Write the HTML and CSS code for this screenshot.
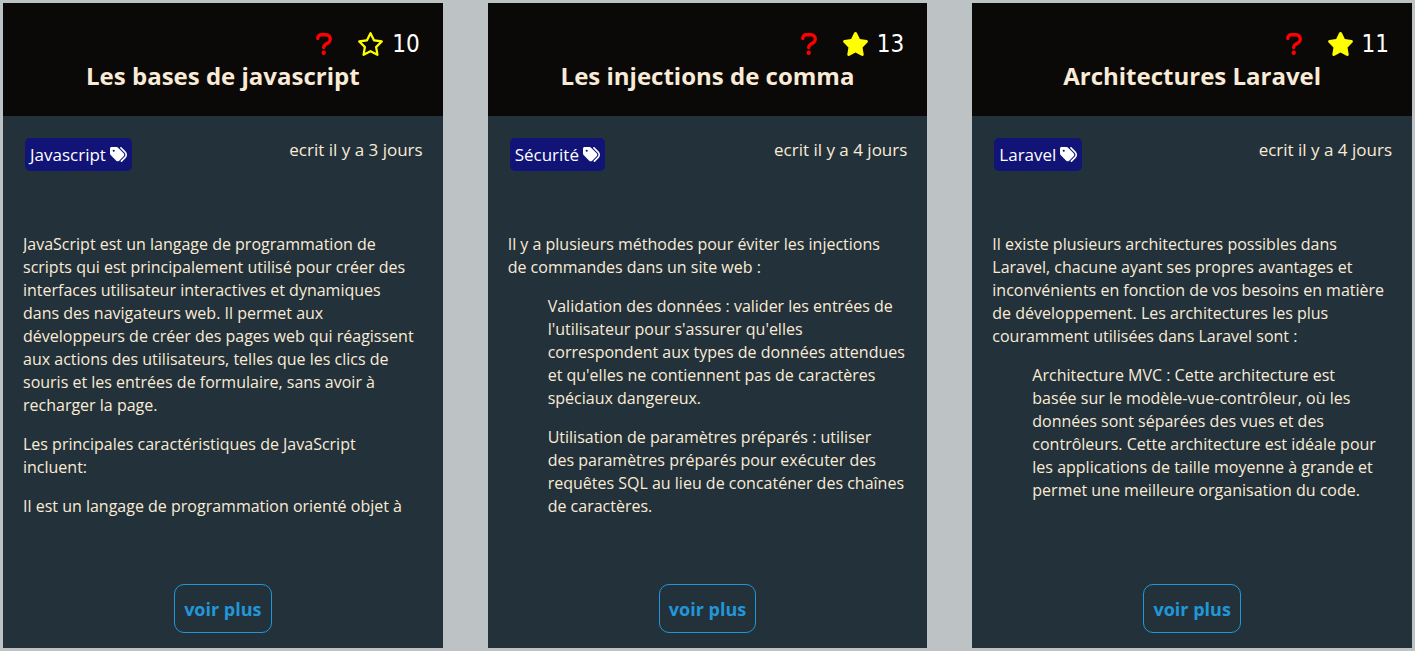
FILE: index.html
```html
<!DOCTYPE html>
<html lang="fr">
<head>
<meta charset="utf-8">
<meta name="viewport" content="width=device-width, initial-scale=1">
<title>Articles</title>
<link rel="stylesheet" href="styles.css">
</head>
<body>
<svg class="sprite" aria-hidden="true">
  <symbol id="question" viewBox="0 0 16 22"><path d="M1.800 5.600V5.200a3.400 3.400 0 0 1 3.400-3.400h5a4 4 0 0 1 4 4v.7q0 2.100-1.900 3.300L9.400 11.500q-1.700 1.100-1.700 3.100" fill="none" stroke="currentColor" stroke-width="3.400" stroke-linecap="round" stroke-linejoin="round"/><circle cx="7.700" cy="19.700" r="2.200" fill="currentColor"/></symbol>
  <symbol id="star" viewBox="0 0 576 512"><path fill="currentColor" d="M316.9 18C311.6 7 300.4 0 288.1 0s-23.4 7-28.8 18L195 150.3 51.4 171.5c-12 1.8-22 10.2-25.7 21.7s-.7 24.2 7.9 32.7L137.8 329 113.2 474.7c-2 12 3 24.2 12.9 31.3s23 8 33.8 2.3l128.3-68.5 128.3 68.5c10.8 5.7 23.9 4.9 33.8-2.3s14.9-19.3 12.9-31.3L438.5 329 542.7 225.9c8.6-8.5 11.7-21.2 7.9-32.700s-13.700-19.900-25.700-21.700L381.200 150.300 316.900 18z"/></symbol>
  <symbol id="star-outline" viewBox="0 0 576 512"><path fill="currentColor" d="M287.9 0c9.2 0 17.6 5.2 21.6 13.5l68.6 141.3 153.2 22.6c9 1.3 16.5 7.6 19.3 16.3s.5 18.1-5.900 24.500L433.600 328.400l26.200 155.600c1.500 9-2.200 18.100-9.700 23.500s-17.300 6-25.300 1.700l-137-73.200L151 509.100c-8.100 4.300-17.900 3.700-25.300-1.700s-11.200-14.500-9.700-23.500l26.200-155.600L31.100 218.200c-6.500-6.400-8.700-15.900-5.900-24.500s10.300-14.900 19.300-16.300l153.200-22.600L266.300 13.500C270.400 5.200 278.700 0 287.900 0zm0 79L235.400 187.200c-3.500 7.100-10.200 12.100-18.100 13.300L99 217.900 184.900 303c5.500 5.500 8.100 13.300 6.800 21L171.400 443.700l105.200-56.200c7.100-3.800 15.600-3.800 22.600 0l105.200 56.200L384.200 324.100c-1.300-7.700 1.200-15.500 6.800-21l85.900-85.100L358.600 200.500c-7.800-1.200-14.600-6.100-18.100-13.300L287.900 79z"/></symbol>
  <symbol id="tags" viewBox="0 0 512 512"><path fill="currentColor" d="M345 39.100L472.800 168.400c52.400 53 52.400 138.200 0 191.200L360.800 472.900c-9.300 9.400-24.500 9.500-33.900.2s-9.500-24.500-.2-33.900L438.600 325.900c33.900-34.300 33.900-89.400 0-123.700L310.900 72.900c-9.300-9.400-9.200-24.600.2-33.900s24.600-9.200 33.900.2zM0 229.500V80C0 53.500 21.500 32 48 32H197.500c17 0 33.300 6.700 45.300 18.700l168 168c25 25 25 65.500 0 90.500L277.300 442.700c-25 25-65.500 25-90.500 0l-168-168C6.700 262.700 0 246.500 0 229.500zM144 144a32 32 0 1 0-64 0 32 32 0 1 0 64 0z"/></symbol>
</svg>
<main class="cards">
  <article class="card">
    <header class="card-head">
      <div class="stats"><svg class="question"><use href="#question"/></svg><svg class="star"><use href="#star-outline"/></svg><span class="count">10</span></div>
      <h2 class="title">Les bases de javascript</h2>
    </header>
    <div class="card-body">
      <div class="meta"><a class="tag" href="#javascript">Javascript <svg class="tag-icon"><use href="#tags"/></svg></a><span class="date">ecrit il y a 3 jours</span></div>
      <div class="excerpt">
        <p>JavaScript est un langage de programmation de<br>scripts qui est principalement utilisé pour créer des<br>interfaces utilisateur interactives et dynamiques<br>dans des navigateurs web. Il permet aux<br>développeurs de créer des pages web qui réagissent<br>aux actions des utilisateurs, telles que les clics de<br>souris et les entrées de formulaire, sans avoir à<br>recharger la page.</p>
        <p>Les principales caractéristiques de JavaScript<br>incluent:</p>
        <p>Il est un langage de programmation orienté objet à</p>
      </div>
      <a class="more" href="#article-1">voir plus</a>
    </div>
  </article>
  <article class="card">
    <header class="card-head">
      <div class="stats"><svg class="question"><use href="#question"/></svg><svg class="star"><use href="#star"/></svg><span class="count">13</span></div>
      <h2 class="title">Les injections de comma</h2>
    </header>
    <div class="card-body">
      <div class="meta"><a class="tag" href="#securite">Sécurité <svg class="tag-icon"><use href="#tags"/></svg></a><span class="date">ecrit il y a 4 jours</span></div>
      <div class="excerpt">
        <p>Il y a plusieurs méthodes pour éviter les injections<br>de commandes dans un site web :</p>
        <ul class="points">
          <li><p>Validation des données : valider les entrées de<br>l'utilisateur pour s'assurer qu'elles<br>correspondent aux types de données attendues<br>et qu'elles ne contiennent pas de caractères<br>spéciaux dangereux.</p></li>
          <li><p>Utilisation de paramètres préparés : utiliser<br>des paramètres préparés pour exécuter des<br>requêtes SQL au lieu de concaténer des chaînes<br>de caractères.</p></li>
        </ul>
      </div>
      <a class="more" href="#article-2">voir plus</a>
    </div>
  </article>
  <article class="card">
    <header class="card-head">
      <div class="stats"><svg class="question"><use href="#question"/></svg><svg class="star"><use href="#star"/></svg><span class="count">11</span></div>
      <h2 class="title">Architectures Laravel</h2>
    </header>
    <div class="card-body">
      <div class="meta"><a class="tag" href="#laravel">Laravel <svg class="tag-icon"><use href="#tags"/></svg></a><span class="date">ecrit il y a 4 jours</span></div>
      <div class="excerpt">
        <p>Il existe plusieurs architectures possibles dans<br>Laravel, chacune ayant ses propres avantages et<br>inconvénients en fonction de vos besoins en matière<br>de développement. Les architectures les plus<br>couramment utilisées dans Laravel sont :</p>
        <ul class="points">
          <li><p>Architecture MVC : Cette architecture est<br>basée sur le modèle-vue-contrôleur, où les<br>données sont séparées des vues et des<br>contrôleurs. Cette architecture est idéale pour<br>les applications de taille moyenne à grande et<br>permet une meilleure organisation du code.</p></li>
        </ul>
      </div>
      <a class="more" href="#article-3">voir plus</a>
    </div>
  </article>
</main>
</body>
</html>
```

FILE: styles.css
```css
* { box-sizing: border-box; }
body {
  margin: 0;
  background: #bdc2c5;
  color: #faebd7;
  font: 16px/23px "Comic Sans MS", "Open Sans", sans-serif;
}
.sprite { display: none; }
.cards {
  display: grid;
  grid-template-columns: repeat(3, minmax(0, 1fr));
  column-gap: 45px;
  padding: 3px;
}
.card { display: flex; flex-direction: column; background: #23323a; }
.card-head { padding: 23px 23px 26px; background: #0a0907; }
.stats { display: flex; justify-content: flex-end; align-items: center; height: 36px; }
.question { width: 16px; height: 22px; color: #f00; margin-right: 25px; }
.star { width: 27px; height: 24px; color: #ff0; margin-right: 8px; }
.count { color: #fff; font: 24px/32px Tahoma, "DejaVu Sans Condensed", sans-serif; }
.title { margin: 0; font-size: 24px; line-height: 28px; font-weight: 700; text-align: center; }
.card-body { flex: 1; display: flex; flex-direction: column; padding: 22px 20px 15px; }
.meta { display: flex; justify-content: space-between; align-items: flex-start; font-size: 17px; }
.tag {
  display: flex;
  align-items: center;
  gap: 4px;
  margin-left: 2px;
  padding: 5px;
  border-radius: 5px;
  background: #111377;
  color: #fff;
  text-decoration: none;
}
.tag-icon { width: 17px; height: 17px; }
.excerpt { height: 288px; margin-top: 62px; overflow: hidden; white-space: nowrap; }
.excerpt p { margin: 0 0 16px; }
.points { margin: 0; padding-left: 40px; list-style: none; }
.more {
  align-self: center;
  margin-top: auto;
  padding: 13px 9px 11px;
  border: 1px solid #2196d9;
  border-radius: 10px;
  color: #2196d9;
  font-size: 18px;
  font-weight: 700;
  text-decoration: none;
}
@media (min-width: 1200px) {
  .card { min-height: calc(100vh - 6px); }
}
```
